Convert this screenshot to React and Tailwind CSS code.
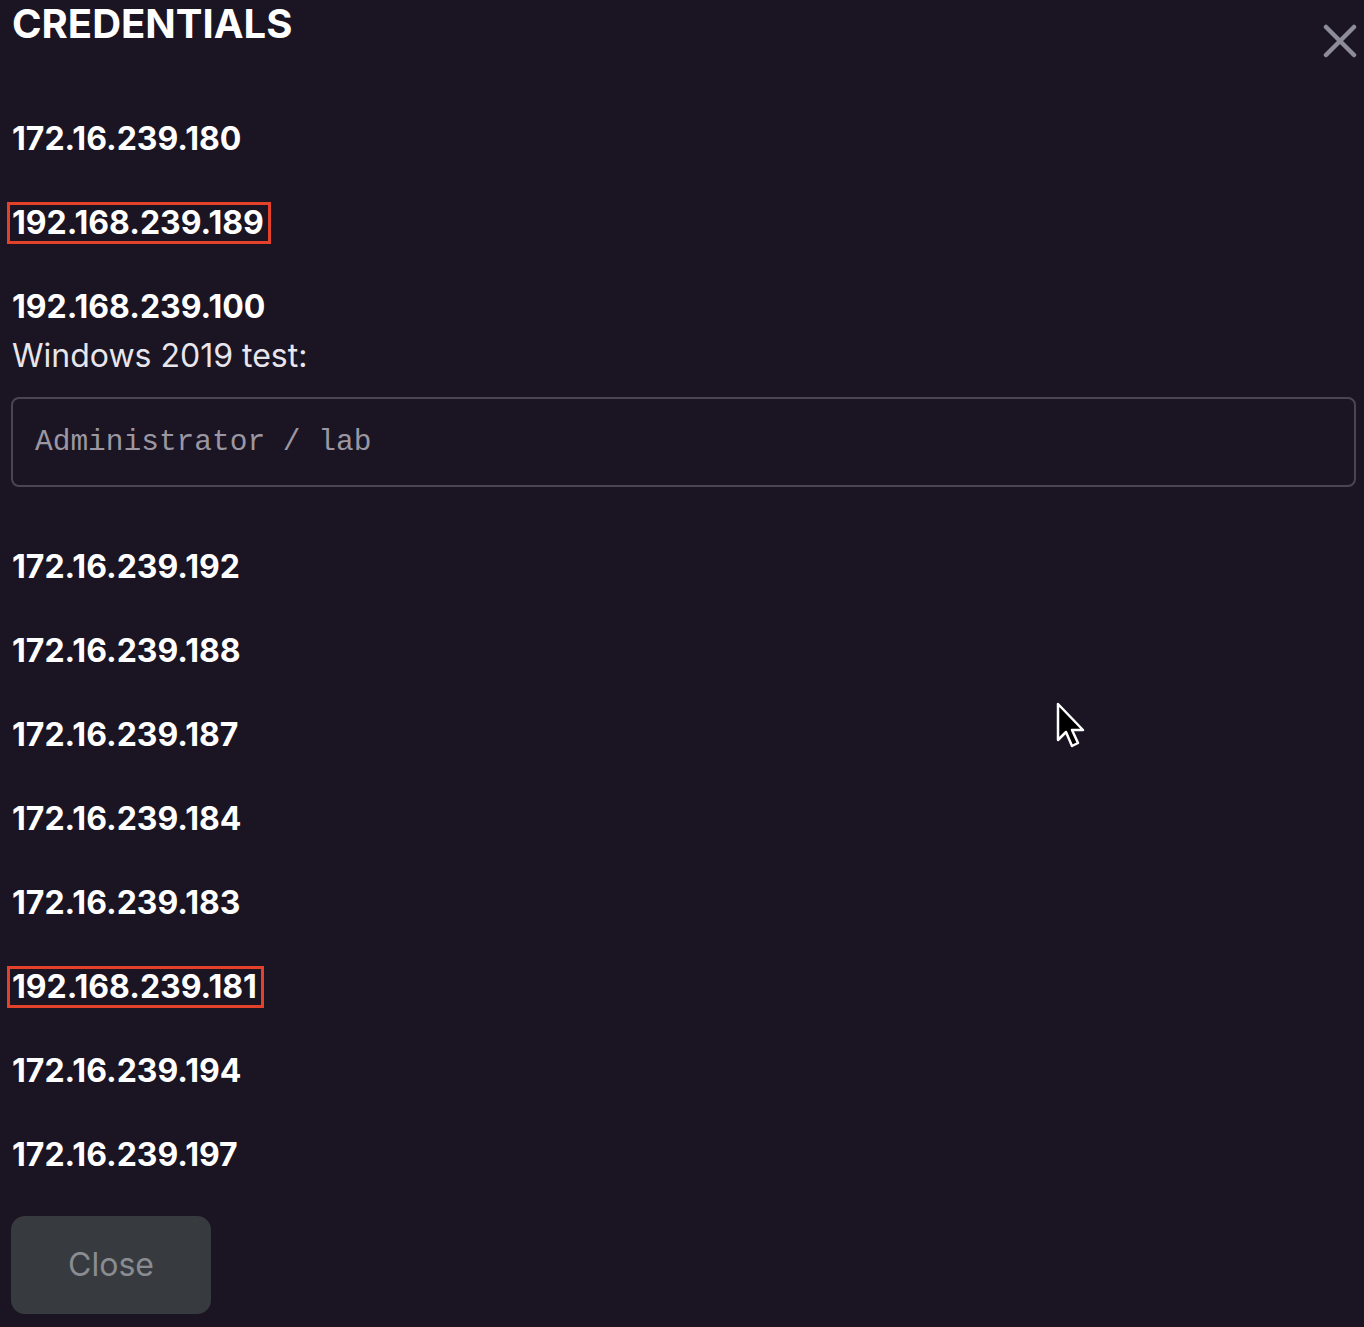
import React from 'react';

const hosts = [
    { ip: '172.16.239.180' },
    { ip: '192.168.239.189', marked: true },
    { ip: '192.168.239.100', note: 'Windows 2019 test:', creds: 'Administrator / lab' },
    { ip: '172.16.239.192' },
    { ip: '172.16.239.188' },
    { ip: '172.16.239.187' },
    { ip: '172.16.239.184' },
    { ip: '172.16.239.183' },
    { ip: '192.168.239.181', marked: true },
    { ip: '172.16.239.194' },
    { ip: '172.16.239.197' },
];

const Pointer = () => (
    <svg width="30" height="48" viewBox="0 0 30 48" className="absolute left-[1055px] top-[702px]">
        <path d="M3 2 L3 38 L11 30 L17 44 L23 41 L17 28 L28 28 Z" fill="#000" stroke="#fff" strokeWidth="2.5" strokeLinejoin="round" />
    </svg>
);

export default function App() {
    return (
        <div className="relative min-h-[1327px] bg-[#1a1423] text-white font-['Inter','Liberation_Sans',sans-serif] px-[12px] overflow-hidden">
            <div className="flex items-start justify-between">
                <h1 className="text-[40px] leading-[48px] font-bold">CREDENTIALS</h1>
                <button className="mt-[24px] -mr-[5px] text-[#8f8c99]">
                    <svg width="34" height="34" viewBox="0 0 34 34">
                        <path d="M3 3 L31 31 M31 3 L3 31" stroke="currentColor" strokeWidth="4.5" strokeLinecap="round" />
                    </svg>
                </button>
            </div>

            <div className="mt-[58px]">
                {hosts.map((h) => (
                    <div key={h.ip} className={h.note ? 'mb-[57px]' : 'mb-[39px]'}>
                        <div className="text-[32px] leading-[45px] font-bold">
                            {h.marked ? (
                                <span className="-ml-[5px] inline-block border-[3px] border-[#e4412a] pl-[2px] pr-[4px] leading-[36px]">{h.ip}</span>
                            ) : h.ip}
                        </div>
                        {h.note && (
                            <>
                                <div className="mt-[4px] text-[32px] leading-[45px] text-[#e8e6ec]">{h.note}</div>
                                <div className="mt-[19px] h-[90px] -ml-[1px] -mr-[4px] border-2 border-[#4a4553] rounded-[8px] px-[22px] flex items-center">
                                    <span className="font-['Liberation_Mono',monospace] text-[29.5px] text-[#9b97a2]">{h.creds}</span>
                                </div>
                            </>
                        )}
                    </div>
                ))}
            </div>

            <button className="-ml-[1px] w-[200px] h-[98px] rounded-[14px] bg-[#373b3f] text-[32px] text-[#898c90]">Close</button>

            <Pointer />
        </div>
    );
}
